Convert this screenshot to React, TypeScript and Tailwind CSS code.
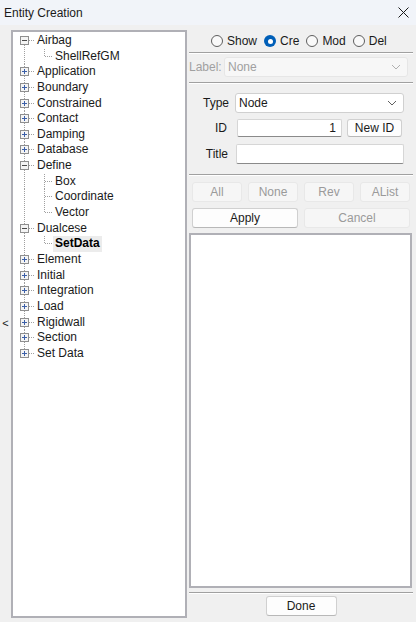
import React from 'react';

type Row = {
  label: string;
  depth: 0 | 1;
  expander?: 'open' | 'closed';
  first?: boolean;
  last?: boolean;
  lastChild?: boolean;
  selected?: boolean;
};

const tree: { label: string; children?: string[] }[] = [
  { label: 'Airbag', children: ['ShellRefGM'] },
  { label: 'Application' },
  { label: 'Boundary' },
  { label: 'Constrained' },
  { label: 'Contact' },
  { label: 'Damping' },
  { label: 'Database' },
  { label: 'Define', children: ['Box', 'Coordinate', 'Vector'] },
  { label: 'Dualcese', children: ['SetData'] },
  { label: 'Element' },
  { label: 'Initial' },
  { label: 'Integration' },
  { label: 'Load' },
  { label: 'Rigidwall' },
  { label: 'Section' },
  { label: 'Set Data' },
];

const rows: Row[] = [];
tree.forEach((node, i) => {
  rows.push({
    label: node.label,
    depth: 0,
    expander: node.children ? 'open' : 'closed',
    first: i === 0,
    last: i === tree.length - 1,
  });
  node.children?.forEach((c, j) => {
    rows.push({
      label: c,
      depth: 1,
      lastChild: j === node.children!.length - 1,
      selected: c === 'SetData',
    });
  });
});

const FONT = { fontFamily: '"Liberation Sans", Arial, sans-serif' };

function TreeLines({ row }: { row: Row }) {
  const dot = { stroke: '#a0a0a0', strokeDasharray: '1 1' };
  return (
    <svg
      width={row.depth === 0 ? 22 : 40}
      height="100%"
      className="shrink-0 h-full"
      shapeRendering="crispEdges"
    >
      <line x1="11.5" x2="11.5" y1={row.first ? '50%' : '0'} y2={row.last ? '50%' : '100%'} {...dot} />
      {row.depth === 0 ? (
        <>
          <line x1="16" x2="23" y1="50%" y2="50%" {...dot} />
          <svg x="0" y="50%" overflow="visible">
            <rect x="7.5" y="-4.5" width="8" height="8" fill="#f4f4f4" stroke="#8f8f8f" />
            <rect x="9" y="-1" width="5" height="1" fill={row.expander === 'open' ? '#4a4a4a' : '#3b5fa8'} />
            {row.expander === 'closed' && <rect x="11" y="-3" width="1" height="5" fill="#3b5fa8" />}
          </svg>
        </>
      ) : (
        <>
          <line x1="31.5" x2="31.5" y1="0" y2={row.lastChild ? '50%' : '100%'} {...dot} />
          <line x1="32" x2="40" y1="50%" y2="50%" {...dot} />
        </>
      )}
    </svg>
  );
}

function Radio({ label, checked }: { label: string; checked?: boolean }) {
  return (
    <div className="flex items-center gap-[4px]">
      {checked ? (
        <span className="w-[12px] h-[12px] rounded-full bg-[#005fb8] flex items-center justify-center">
          <span className="w-[5px] h-[5px] rounded-full bg-white" />
        </span>
      ) : (
        <span className="w-[12px] h-[12px] rounded-full border border-[#5e5e5e] bg-[#f9f9f9]" />
      )}
      <span className="text-[12px] text-[#1a1a1a]">{label}</span>
    </div>
  );
}

function Chevron({ color }: { color: string }) {
  return (
    <svg width="10" height="6" viewBox="0 0 10 6" className="shrink-0">
      <path d="M1 1 L5 5 L9 1" fill="none" stroke={color} strokeWidth="1" />
    </svg>
  );
}

function Separator() {
  return (
    <div className="flex flex-col">
      <div className="h-px bg-[#a0a0a0]" />
      <div className="h-px bg-white" />
    </div>
  );
}

function Btn({ label, disabled }: { label: string; disabled?: boolean }) {
  return (
    <div
      className={
        disabled
          ? 'h-full flex items-center justify-center rounded-[3px] border border-[#e8e8e8] bg-[#f6f6f6] text-[12px] text-[#9a9a9a]'
          : 'h-full flex items-center justify-center rounded-[3px] border border-[#d0d0d0] border-b-[#b8b8b8] bg-[#fdfdfd] text-[12px] text-[#1a1a1a]'
      }
    >
      {label}
    </div>
  );
}

export default function App() {
  return (
    <div className="w-[416px] h-[622px] bg-[#f0f0f0] flex flex-col overflow-hidden select-none" style={FONT}>
      {/* title bar */}
      <div className="h-[25px] shrink-0 bg-[#f1f4f9] flex items-center justify-between pl-[4px] pr-[7px]">
        <span className="text-[12px] text-[#1a1a1a]">Entity Creation</span>
        <svg width="11" height="11" viewBox="0 0 11 11">
          <path d="M0.5 0.5 L10.5 10.5 M10.5 0.5 L0.5 10.5" stroke="#1a1a1a" strokeWidth="1" />
        </svg>
      </div>

      <div className="flex flex-1 min-h-0">
        {/* left gutter */}
        <div className="w-[11px] shrink-0 flex items-center justify-center">
          <span className="text-[11px] text-[#1a1a1a] leading-none">&lt;</span>
        </div>

        {/* tree */}
        <div className="mt-[5px] h-[588px] w-[176px] shrink-0 bg-white border-2 border-[#b0b0b6] pt-px">
          {rows.map((row, i) => (
            <div key={i} className="flex h-[15.65px] items-stretch">
              <TreeLines row={row} />
              <span
                className={
                  row.selected
                    ? 'px-[2px] text-[12px] leading-[15.65px] whitespace-nowrap font-bold text-black bg-[#ececec]'
                    : 'px-[2px] text-[12px] leading-[15.65px] whitespace-nowrap text-[#1a1a1a]'
                }
              >
                {row.label}
              </span>
            </div>
          ))}
        </div>

        {/* right panel */}
        <div className="ml-[2px] w-[224px] shrink-0 flex flex-col">
          <div className="mt-[5px] h-[22px] flex items-center pl-[22px] gap-[7px]">
            <Radio label="Show" />
            <Radio label="Cre" checked />
            <Radio label="Mod" />
            <Radio label="Del" />
          </div>
          <Separator />

          <div className="mt-[3px] h-[20px] flex items-center">
            <span className="w-[35px] text-[12px] text-[#a0a0a0]">Label:</span>
            <div className="w-[184px] h-full flex items-center justify-between pl-[3px] pr-[6px] bg-[#f7f7f7] border border-[#e6e6e6] rounded-[3px]">
              <span className="text-[12px] text-[#a0a0a0]">None</span>
              <Chevron color="#b0b0b0" />
            </div>
          </div>
          <div className="mt-[5px]">
            <Separator />
          </div>

          <div className="mt-[9px] h-[20px] flex items-center">
            <span className="w-[40px] text-right text-[12px] text-[#1a1a1a]">Type</span>
            <div className="ml-[6px] w-[169px] h-full flex items-center justify-between pl-[3px] pr-[6px] bg-white border border-[#d0d0d0] rounded-[3px]">
              <span className="text-[12px] text-[#1a1a1a]">Node</span>
              <Chevron color="#606060" />
            </div>
          </div>

          <div className="mt-[6px] h-[18px] flex items-center">
            <span className="w-[38px] text-right text-[12px] text-[#1a1a1a]">ID</span>
            <div className="ml-[10px] w-[105px] h-full flex items-center justify-end pr-[5px] bg-white border border-[#d6d6d6] border-b-[#8a8a8a] rounded-[2px]">
              <span className="text-[12px] text-[#1a1a1a]">1</span>
            </div>
            <div className="ml-[5px] w-[55px] h-full">
              <Btn label="New ID" />
            </div>
          </div>

          <div className="mt-[7px] h-[20px] flex items-center">
            <span className="w-[39px] text-right text-[12px] text-[#1a1a1a]">Title</span>
            <div className="ml-[8px] w-[168px] h-full bg-white border border-[#d6d6d6] border-b-[#8a8a8a] rounded-[2px]" />
          </div>

          <div className="mt-[10px]">
            <Separator />
          </div>

          <div className="mt-[6px] h-[18px] mx-[3px] grid grid-cols-4 gap-[6px]">
            <Btn label="All" disabled />
            <Btn label="None" disabled />
            <Btn label="Rev" disabled />
            <Btn label="AList" disabled />
          </div>

          <div className="mt-[8px] h-[19px] mx-[3px] grid grid-cols-2 gap-[6px]">
            <Btn label="Apply" />
            <Btn label="Cancel" disabled />
          </div>

          <div className="mt-[6px] h-[355px] w-[223px] bg-white border-2 border-[#b0b0b6]" />

          <div className="mt-[4px]">
            <Separator />
          </div>

          <div className="mt-[2px] h-[20px] flex justify-center">
            <div className="w-[71px] h-full">
              <Btn label="Done" />
            </div>
          </div>
        </div>
      </div>
    </div>
  );
}
